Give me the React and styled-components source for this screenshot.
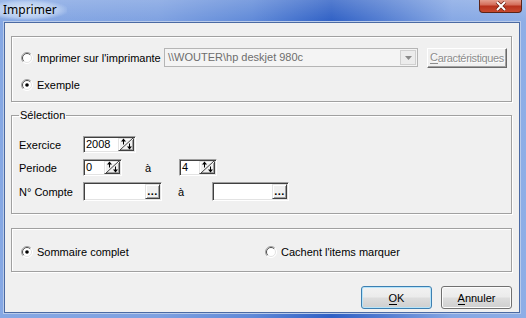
import styled, { createGlobalStyle } from 'styled-components';

const GlobalStyle = createGlobalStyle`
  html, body {
    margin: 0;
    padding: 0;
  }
  body {
    width: 526px;
    height: 318px;
    overflow: hidden;
    font-family: "Liberation Sans", Arial, sans-serif;
    font-size: 11px;
    color: #000;
  }
`;

const Window = styled.div`
  width: 526px;
  height: 318px;
  box-sizing: border-box;
  display: flex;
  flex-direction: column;
  background:
    linear-gradient(180deg, rgba(255,255,255,0.18) 0%, rgba(255,255,255,0) 22px),
    linear-gradient(90deg, #86a8e4 0%, #7ea1e1 30%, #5f89d8 48%, #2f60c5 63%, #4f7ad0 72%, #85a7e4 86%, #8eaee6 100%);
`;

const TitleBar = styled.div`
  height: 22px;
  flex: none;
  display: flex;
  justify-content: space-between;
  align-items: flex-start;
  padding: 0 4px 0 0;
`;

const Title = styled.span`
  font-family: "Noto Sans", "Open Sans", sans-serif;
  font-size: 12px;
  line-height: 20px;
  padding: 0 10px 0 3px;
  background: radial-gradient(ellipse at 40% 50%, rgba(225,236,250,0.95) 0%, rgba(205,222,246,0.6) 55%, rgba(255,255,255,0) 75%);
`;

const CloseButton = styled.div`
  width: 41px;
  height: 13px;
  margin-top: -1px;
  border: 1px solid #5b2418;
  border-top: none;
  border-radius: 0 0 4px 4px;
  background: linear-gradient(180deg, #e8a898 0%, #d46d5a 45%, #b8321c 55%, #c84a30 100%);
  display: flex;
  align-items: center;
  justify-content: center;
`;

const Client = styled.div`
  flex: 1;
  margin: 0 6px 5px 4px;
  background: #f0f0f0;
  border: 1px solid #4b6aa3;
  box-shadow: 0 0 0 1px #b9cbea;
  display: flex;
  flex-direction: column;
  padding: 13px 7px 0 6px;
`;

const Group = styled.div`
  border: 1px solid #a0a0a0;
  box-shadow: inset 1px 1px 0 #fff, 1px 1px 0 #fff;
  display: flex;
  flex-direction: column;
  justify-content: ${p => p.$justify || 'flex-start'};
  height: ${p => p.$h}px;
  box-sizing: border-box;
  margin-top: ${p => p.$mt || 0}px;
  padding: ${p => p.$pad};
  gap: ${p => p.$gap || 0}px;
`;

const FieldSet = styled.fieldset`
  margin: 7px 0 0 0;
  border: 1px solid #a0a0a0;
  box-shadow: inset 1px 1px 0 #fff, 1px 1px 0 #fff;
  padding: 14px 0 12px 7px;
  display: flex;
  flex-direction: column;
  gap: 6px;
`;

const Legend = styled.legend`
  padding: 0 1px;
  line-height: 13px;
`;

const Row = styled.div`
  display: flex;
  align-items: center;
  height: ${p => p.$h || 16}px;
`;

const Option = styled.label`
  display: flex;
  align-items: center;
  gap: 4px;
  width: ${p => (p.$w ? `${p.$w}px` : 'auto')};
  flex: none;
  white-space: nowrap;
`;

const RadioSvg = styled.svg`
  flex: none;
  display: block;
`;

const Combo = styled.div`
  width: 254px;
  height: 19px;
  box-sizing: border-box;
  border: 1px solid #b5b5b5;
  background: #f4f4f4;
  display: flex;
  align-items: stretch;
  color: #6d6d6d;
`;

const ComboText = styled.span`
  flex: 1;
  padding-left: 3px;
  line-height: 17px;
`;

const ComboArrow = styled.div`
  width: 16px;
  margin: 1px;
  box-sizing: border-box;
  border: 1px solid #d0d0d0;
  background: #ececec;
  display: flex;
  align-items: center;
  justify-content: center;
`;

const ClassicButton = styled.div`
  width: 80px;
  height: 20px;
  margin-left: 9px;
  box-sizing: border-box;
  border-top: 1px solid #fff;
  border-left: 1px solid #fff;
  border-right: 1px solid #696969;
  border-bottom: 1px solid #696969;
  box-shadow: inset -1px -1px 0 #a0a0a0;
  display: flex;
  align-items: center;
  justify-content: center;
  color: #8d8d8d;
  letter-spacing: -0.35px;
  text-shadow: 1px 1px 0 #fff;
  white-space: nowrap;
  u {
    text-decoration: none;
    border-bottom: 1px solid #8d8d8d;
    line-height: 11px;
  }
`;

const FieldLabel = styled.span`
  width: 64px;
  flex: none;
`;

const ToLabel = styled.span`
  width: ${p => p.$w}px;
  flex: none;
  padding-left: ${p => p.$pl}px;
  box-sizing: border-box;
`;

const Sunken = styled.div`
  width: ${p => p.$w}px;
  height: ${p => p.$h}px;
  flex: none;
  box-sizing: border-box;
  border-top: 1px solid #a0a0a0;
  border-left: 1px solid #a0a0a0;
  border-right: 1px solid #fff;
  border-bottom: 1px solid #fff;
  box-shadow: inset 1px 1px 0 #404040, inset -1px -1px 0 #e3e3e3;
  background: #fff;
  display: flex;
  align-items: stretch;
  padding: 1px 1px 1px 2px;
`;

const InputText = styled.span`
  flex: 1;
  line-height: ${p => p.$lh}px;
`;

const Raised = styled.div`
  width: ${p => p.$w}px;
  flex: none;
  box-sizing: border-box;
  background: #f0f0f0;
  border-top: 1px solid #e3e3e3;
  border-left: 1px solid #e3e3e3;
  border-right: 1px solid #404040;
  border-bottom: 1px solid #404040;
  box-shadow: inset 1px 1px 0 #fff, inset -1px -1px 0 #a0a0a0;
  display: flex;
  align-items: center;
  justify-content: center;
  font-weight: bold;
  letter-spacing: 0.5px;
  line-height: 8px;
  padding-bottom: 2px;
`;

const Footer = styled.div`
  display: flex;
  justify-content: flex-end;
  gap: 9px;
  margin-top: auto;
  margin-bottom: 3px;
`;

const DialogButton = styled.div`
  width: 71px;
  height: 23px;
  box-sizing: border-box;
  border: 1px solid ${p => (p.$default ? '#3c7fb1' : '#707070')};
  border-radius: 3px;
  background: linear-gradient(180deg, #f2f2f2 0%, #ebebeb 48%, #dddddd 52%, #cfcfcf 100%);
  box-shadow: inset 0 0 0 1px ${p => (p.$default ? '#b6e4fa' : '#fcfcfc')};
  display: flex;
  align-items: center;
  justify-content: center;
  u {
    text-decoration: none;
    border-bottom: 1px solid #000;
    line-height: 11px;
  }
`;

const Radio = ({ checked }) => (
  <RadioSvg width="12" height="12" viewBox="0 0 12 12">
    <circle cx="6" cy="6" r="5.5" fill="#fff" />
    <path d="M2.1 9.9 A5.5 5.5 0 0 1 9.9 2.1" stroke="#a0a0a0" fill="none" />
    <path d="M9.9 2.1 A5.5 5.5 0 0 1 2.1 9.9" stroke="#fff" fill="none" />
    <path d="M2.8 9.2 A4.5 4.5 0 0 1 9.2 2.8" stroke="#505050" fill="none" />
    <path d="M9.2 2.8 A4.5 4.5 0 0 1 2.8 9.2" stroke="#e3e3e3" fill="none" />
    {checked && <circle cx="6" cy="6" r="1.8" fill="#000" />}
  </RadioSvg>
);

const SpinIcon = () => (
  <svg width="13" height="12" viewBox="0 0 13 12">
    <line x1="0" y1="12" x2="13" y2="0" stroke="#404040" />
    <path d="M3.5 0.5 L1 3.5 H3 V6.5 H4 V3.5 H6 Z" fill="#000" />
    <path d="M9.5 11.5 L7 8.5 H9 V5.5 H10 V8.5 H12 Z" fill="#000" />
  </svg>
);

const SpinBox = ({ w, value }) => (
  <Sunken $w={w} $h={17}>
    <InputText $lh={13}>{value}</InputText>
    <Raised $w={16}>
      <SpinIcon />
    </Raised>
  </Sunken>
);

const BrowseBox = ({ w }) => (
  <Sunken $w={w} $h={19}>
    <InputText $lh={15} />
    <Raised $w={15}>...</Raised>
  </Sunken>
);

export default function App() {
  return (
    <>
      <GlobalStyle />
      <Window>
        <TitleBar>
          <Title>Imprimer</Title>
          <CloseButton>
            <svg width="12" height="10" viewBox="0 0 12 10">
              <path d="M2 1 L10 9 M10 1 L2 9" stroke="#6b1d10" strokeWidth="3.4" />
              <path d="M2 1 L10 9 M10 1 L2 9" stroke="#fff" strokeWidth="2" />
            </svg>
          </CloseButton>
        </TitleBar>
        <Client>
          <Group $h={66} $pad="11px 4px 0 9px" $gap={10}>
            <Row $h={19}>
              <Option $w={143}>
                <Radio />
                Imprimer sur l'imprimante
              </Option>
              <Combo>
                <ComboText>{'\\\\WOUTER\\hp deskjet 980c'}</ComboText>
                <ComboArrow>
                  <svg width="7" height="4" viewBox="0 0 7 4">
                    <path d="M0 0 H7 L3.5 4 Z" fill="#8a8a8a" />
                  </svg>
                </ComboArrow>
              </Combo>
              <ClassicButton>
                <u>C</u>aractéristiques
              </ClassicButton>
            </Row>
            <Row>
              <Option>
                <Radio checked />
                Exemple
              </Option>
            </Row>
          </Group>

          <FieldSet>
            <Legend>Sélection</Legend>
            <Row $h={17}>
              <FieldLabel>Exercice</FieldLabel>
              <SpinBox w={53} value="2008" />
            </Row>
            <Row $h={17}>
              <FieldLabel>Periode</FieldLabel>
              <SpinBox w={39} value="0" />
              <ToLabel $w={57} $pl={23}>à</ToLabel>
              <SpinBox w={38} value="4" />
            </Row>
            <Row $h={19}>
              <FieldLabel>N° Compte</FieldLabel>
              <BrowseBox w={79} />
              <ToLabel $w={50} $pl={16}>à</ToLabel>
              <BrowseBox w={77} />
            </Row>
          </FieldSet>

          <Group $h={44} $mt={14} $pad="3px 4px 0 9px" $justify="center">
            <Row>
              <Option $w={244}>
                <Radio checked />
                Sommaire complet
              </Option>
              <Option>
                <Radio />
                Cachent l'items marquer
              </Option>
            </Row>
          </Group>

          <Footer>
            <DialogButton $default>
              <span><u>O</u>K</span>
            </DialogButton>
            <DialogButton>
              <span><u>A</u>nnuler</span>
            </DialogButton>
          </Footer>
        </Client>
      </Window>
    </>
  );
}
